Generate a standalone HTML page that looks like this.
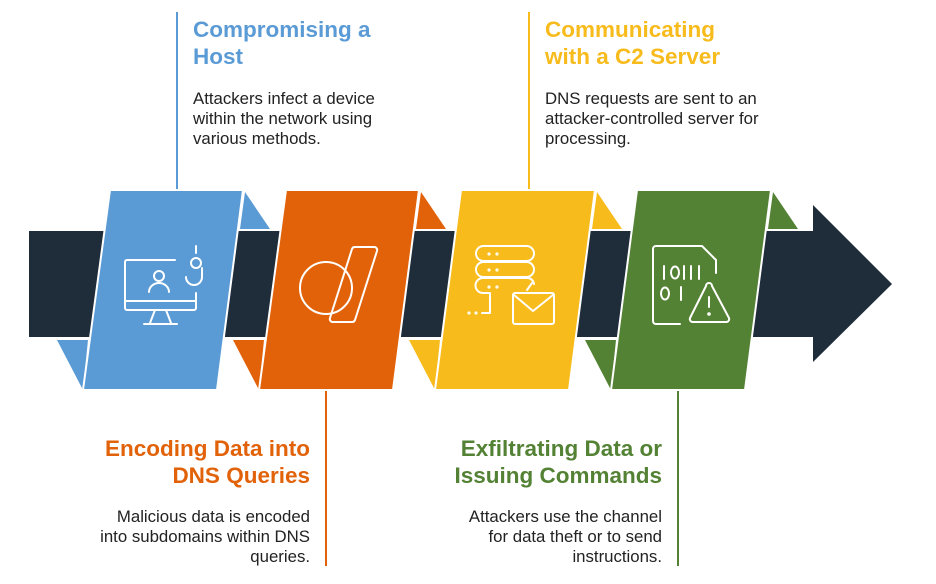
<!DOCTYPE html>
<html><head><meta charset="utf-8"><style>
body{margin:0;background:#fff;}
svg{display:block;}
.h{font-family:"Liberation Sans",Arial,sans-serif;font-weight:bold;font-size:22.5px;}
.b{font-family:"Liberation Sans",Arial,sans-serif;font-size:16.8px;fill:#222;}
.ic{fill:none;stroke:#fff;stroke-width:2;stroke-linecap:round;stroke-linejoin:round;}
</style></head><body>
<svg width="936" height="584" viewBox="0 0 936 584">
<line x1="177" y1="12" x2="177" y2="190" stroke="#5b9bd5" stroke-width="2"/>
<line x1="529" y1="12" x2="529" y2="190" stroke="#f8bb1c" stroke-width="2"/>
<line x1="326" y1="390" x2="326" y2="566" stroke="#e2620a" stroke-width="2"/>
<line x1="678" y1="390" x2="678" y2="566" stroke="#548235" stroke-width="2"/>
<polygon points="29,231 813,231 813,205 892,284 813,362 813,337 29,337" fill="#1f2d3a"/>
<polygon points="245,192 270,229 240,229" fill="#5b9bd5"/>
<polygon points="57,340 88,340 83,390" fill="#5b9bd5"/>
<polygon points="421,192 446,229 416,229" fill="#e2620a"/>
<polygon points="233,340 264,340 259,390" fill="#e2620a"/>
<polygon points="597,192 622,229 592,229" fill="#f8bb1c"/>
<polygon points="409,340 440,340 435,390" fill="#f8bb1c"/>
<polygon points="773,192 798,229 768,229" fill="#548235"/>
<polygon points="585,340 616,340 611,390" fill="#548235"/>
<polygon points="110,190 243,190 217,390 83,390" fill="#5b9bd5" stroke="#fff" stroke-width="2"/>
<polygon points="286,190 419,190 393,390 259,390" fill="#e2620a" stroke="#fff" stroke-width="2"/>
<polygon points="461,190 595,190 569,390 435,390" fill="#f8bb1c" stroke="#fff" stroke-width="2"/>
<polygon points="637,190 771,190 745,390 611,390" fill="#548235" stroke="#fff" stroke-width="2"/>
<g class="ic">
<path d="M175,260 H127 a2,2 0 0 0 -2,2 V308 a2,2 0 0 0 2,2 H194 a2,2 0 0 0 2,-2 V293"/>
<line x1="125" y1="301" x2="196" y2="301"/>
<path d="M155,310 L150,323 M166,310 L171,323 M144,324 H177"/>
<circle cx="159" cy="276" r="5"/>
<path d="M149,292 a10,9 0 0 1 20,0"/>
<path d="M196,246 V253 M186,277 a8,8 0 0 0 16,0 V268"/>
<circle cx="196" cy="263" r="5"/>
</g>
<g class="ic">
<circle cx="326" cy="288" r="26"/>
<path d="M355,247 H374 a3,3 0 0 1 3,4 L355,320 a3,3 0 0 1 -3,2 H333 a3,3 0 0 1 -3,-4 L352,249 a3,3 0 0 1 3,-2 Z"/>
</g>
<g class="ic">
<rect x="476" y="246" width="58" height="15" rx="7.5"/>
<rect x="476" y="262" width="58" height="15" rx="7.5"/>
<path d="M534,284 a7,7 0 0 0 -6,-6 H483 a7.5,7.5 0 0 0 0,15 H490 V313 H482"/>
<path d="M527,290 L532,283"/>
<circle cx="489" cy="254" r="0.6"/><circle cx="497" cy="254" r="0.6"/>
<circle cx="489" cy="270" r="0.6"/><circle cx="497" cy="270" r="0.6"/>
<circle cx="489" cy="287" r="0.6"/><circle cx="497" cy="287" r="0.6"/>
<circle cx="476" cy="313" r="0.6"/><circle cx="469" cy="313" r="0.6"/>
<rect x="513" y="293" width="41" height="31" rx="2"/>
<path d="M514,295 L533,311 L553,295"/>
</g>
<g class="ic">
<path d="M680,324 H656 a3,3 0 0 1 -3,-3 V249 a3,3 0 0 1 3,-3 H702 L716,260 V273"/>
<path d="M664,266 V279 M684,266 V279 M691,266 V279 M699,266 V279"/>
<ellipse cx="675" cy="272.5" rx="4" ry="6"/>
<ellipse cx="665" cy="293.5" rx="4" ry="6"/>
<path d="M681,287 V300"/>
<path d="M706,286 L690,318 a3,3 0 0 0 3,4 H726 a3,3 0 0 0 3,-4 L712,286 a3,3 0 0 0 -6,0 Z"/>
<path d="M709,297 V307"/><circle cx="709" cy="314" r="0.8"/>
</g>
<text class="h" fill="#5b9bd5"><tspan x="193" y="37">Compromising a</tspan><tspan x="193" y="64">Host</tspan></text>
<text class="b"><tspan x="193" y="104">Attackers infect a device</tspan><tspan x="193" y="124">within the network using</tspan><tspan x="193" y="144">various methods.</tspan></text>
<text class="h" fill="#f8bb1c"><tspan x="545" y="37">Communicating</tspan><tspan x="545" y="64">with a C2 Server</tspan></text>
<text class="b"><tspan x="545" y="104">DNS requests are sent to an</tspan><tspan x="545" y="124">attacker-controlled server for</tspan><tspan x="545" y="144">processing.</tspan></text>
<text class="h" fill="#e2620a" text-anchor="end"><tspan x="310" y="456">Encoding Data into</tspan><tspan x="310" y="483">DNS Queries</tspan></text>
<text class="b" text-anchor="end"><tspan x="310" y="522">Malicious data is encoded</tspan><tspan x="310" y="542">into subdomains within DNS</tspan><tspan x="310" y="562">queries.</tspan></text>
<text class="h" fill="#548235" text-anchor="end"><tspan x="662" y="456">Exfiltrating Data or</tspan><tspan x="662" y="483">Issuing Commands</tspan></text>
<text class="b" text-anchor="end"><tspan x="662" y="522">Attackers use the channel</tspan><tspan x="662" y="542">for data theft or to send</tspan><tspan x="662" y="562">instructions.</tspan></text>
</svg>
</body></html>
